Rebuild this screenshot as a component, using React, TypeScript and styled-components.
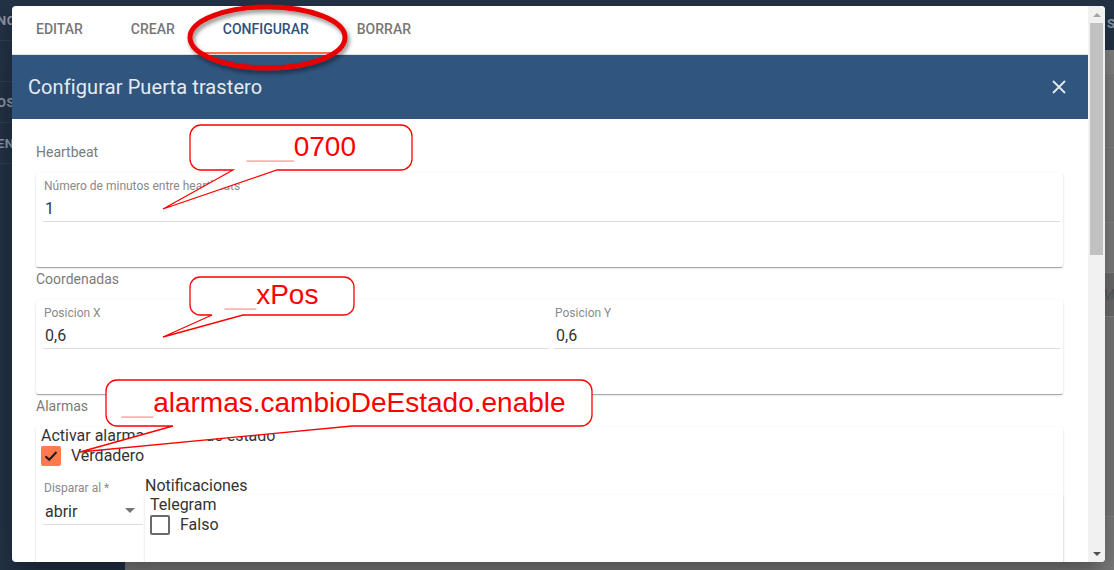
import React from "react";
import styled, { createGlobalStyle } from "styled-components";

const GlobalStyle = createGlobalStyle`
  html, body { margin: 0; padding: 0; width: 1114px; height: 570px; overflow: hidden; }
  body { font-family: Roboto, "Liberation Sans", sans-serif; }
  * { box-sizing: border-box; }
`;

const Screen = styled.div`
  position: relative;
  width: 1114px;
  height: 570px;
  overflow: hidden;
  display: grid;
  grid-template-columns: 125px 1fr;
  grid-template-rows: 50px 1fr;
`;

const Sidebar = styled.nav`
  grid-row: 1 / 3;
  background: #243447;
  display: flex;
  flex-direction: column;
`;

const SideItem = styled.div`
  height: 41px;
  border-bottom: 1px solid #30415a;
  display: flex;
  align-items: center;
  overflow: hidden;
`;

const SideText = styled.span`
  margin-left: -3px;
  font: 700 13px Roboto, sans-serif;
  color: #8f9aa9;
  letter-spacing: 0.5px;
`;

const TopBar = styled.header`
  background: #243447;
  display: flex;
  align-items: center;
  justify-content: flex-end;
  padding-bottom: 4px;
`;

const TopBarText = styled.span`
  font: 700 13px Roboto, sans-serif;
  color: #8f9aa9;
  margin-right: -1px;
`;

const Main = styled.main`
  background: #7f7f7f;
  display: flex;
  flex-direction: column;
`;

const MainBand = styled.div<{ $h: number; $bg: string }>`
  height: ${(p) => p.$h}px;
  background: ${(p) => p.$bg};
  border-bottom: 1px solid #8a8a8a;
  display: flex;
  align-items: center;
  justify-content: flex-end;
  font: italic 400 14px Roboto, sans-serif;
  color: #5a5a5a;
`;

const Dialog = styled.div`
  position: absolute;
  left: 12px;
  top: 6px;
  width: 1093px;
  height: 556px;
  background: #fff;
  border-radius: 4px;
  overflow: hidden;
  display: flex;
  box-shadow: 0 11px 15px -7px rgba(0, 0, 0, 0.2), 0 24px 38px 3px rgba(0, 0, 0, 0.14),
    0 9px 46px 8px rgba(0, 0, 0, 0.12);
`;

const DialogMain = styled.div`
  flex: 1;
  min-width: 0;
  display: flex;
  flex-direction: column;
`;

const TabBar = styled.div`
  height: 49px;
  flex-shrink: 0;
  border-bottom: 1px solid #dedede;
  display: flex;
`;

const Tab = styled.div<{ $active?: boolean }>`
  position: relative;
  padding: 0 24px;
  display: flex;
  align-items: center;
  padding-bottom: 2px;
  font: 500 14px Roboto, sans-serif;
  text-transform: uppercase;
  color: ${(p) => (p.$active ? "#2f5179" : "#777777")};
  &::after {
    content: "";
    display: ${(p) => (p.$active ? "block" : "none")};
    position: absolute;
    left: 0;
    right: 0;
    bottom: 0;
    height: 2px;
    background: #ff7043;
  }
`;

const Header = styled.div`
  height: 64px;
  flex-shrink: 0;
  background: #30557e;
  display: flex;
  align-items: center;
  justify-content: space-between;
  padding: 0 17px 0 16px;
`;

const Title = styled.h2`
  margin: 0;
  font: 400 20px Roboto, sans-serif;
  letter-spacing: 0.1px;
  color: #e6ebf1;
`;

const CloseButton = styled.div`
  width: 24px;
  height: 24px;
  display: flex;
  align-items: center;
  justify-content: center;
`;

const Body = styled.div`
  flex: 1;
  overflow: hidden;
  padding: 23px 25px 0 24px;
  display: flex;
  flex-direction: column;
`;

const SectionLabel = styled.div`
  font: 400 14px/20px Roboto, sans-serif;
  color: #7b7b7b;
  margin-bottom: 11px;
`;

const Card = styled.div<{ $min?: number }>`
  background: #fff;
  border-radius: 2px;
  margin-bottom: 2px;
  min-height: ${(p) => p.$min ?? 0}px;
  flex-shrink: 0;
  box-shadow: 0 2px 1px -1px rgba(0, 0, 0, 0.2), 0 1px 1px 0 rgba(0, 0, 0, 0.14),
    0 1px 3px 0 rgba(0, 0, 0, 0.12);
`;

const FieldGrid = styled.div<{ $cols: number }>`
  display: grid;
  grid-template-columns: repeat(${(p) => p.$cols}, 1fr);
  gap: 5px;
  padding: 6px 3px 0 7px;
`;

const Field = styled.div`
  border-bottom: 1px solid #dcdcdc;
`;

const FieldLabel = styled.div`
  font: 400 12px/14px Roboto, sans-serif;
  color: #8a8a8a;
  padding-left: 1px;
`;

const FieldValue = styled.div`
  font: 400 16px/24px Roboto, sans-serif;
  color: #333;
  margin-top: 4px;
  padding-left: 2px;
`;

const CardSpacer = styled.div`
  height: 45px;
`;

const PlainText = styled.div<{ $pad?: number }>`
  font: 400 16px/18px Roboto, sans-serif;
  color: #333;
  padding-left: ${(p) => p.$pad ?? 0}px;
`;

const CheckRow = styled.div<{ $pad?: number }>`
  display: flex;
  align-items: center;
  gap: 10px;
  padding-left: ${(p) => p.$pad ?? 5}px;
  margin-top: 1px;
  font: 400 16px/20px Roboto, sans-serif;
  color: #333;
`;

const CheckBox = styled.div<{ $checked?: boolean }>`
  width: 20px;
  height: 20px;
  border-radius: 2px;
  display: flex;
  align-items: center;
  justify-content: center;
  background: ${(p) => (p.$checked ? "#ff7a50" : "transparent")};
  border: ${(p) => (p.$checked ? "none" : "2px solid #6a6a6a")};
`;

const AlarmRow = styled.div`
  display: flex;
  align-items: flex-start;
  margin-top: 10px;
`;

const SelectField = styled.div`
  width: 100px;
  margin: 0 2px 0 7px;
  padding-top: 5px;
  border-bottom: 1px solid #dcdcdc;
`;

const SelectValue = styled.div`
  display: flex;
  align-items: center;
  justify-content: space-between;
  font: 400 16px/24px Roboto, sans-serif;
  color: #333;
  margin-top: 5px;
  padding: 0 8px 0 2px;
`;

const DropArrow = styled.span`
  width: 0;
  height: 0;
  border-left: 5px solid transparent;
  border-right: 5px solid transparent;
  border-top: 5px solid #757575;
  margin-top: -3px;
`;

const NotifColumn = styled.div`
  flex: 1;
  display: flex;
  flex-direction: column;
  padding-top: 1px;
`;

const NestedCard = styled(Card)`
  margin-top: 0;
  padding: 1px 5px;
  min-height: 140px;
`;

const ScrollTrack = styled.div`
  width: 17px;
  flex-shrink: 0;
  background: #f1f1f1;
  display: flex;
  flex-direction: column;
`;

const ScrollButton = styled.div`
  height: 17px;
  display: flex;
  align-items: center;
  justify-content: center;
`;

const ArrowUp = styled.span`
  width: 0;
  height: 0;
  border-left: 4px solid transparent;
  border-right: 4px solid transparent;
  border-bottom: 4px solid #a3a3a3;
`;

const ArrowDown = styled.span`
  width: 0;
  height: 0;
  border-left: 4px solid transparent;
  border-right: 4px solid transparent;
  border-top: 4px solid #505050;
`;

const ScrollThumb = styled.div`
  height: 232px;
  margin: 0 2px;
  background: #c1c1c1;
`;

const ScrollFill = styled.div`
  flex: 1;
`;

const Overlay = styled.svg`
  position: absolute;
  left: 0;
  top: 0;
  width: 1114px;
  height: 570px;
  pointer-events: none;
  z-index: 10;
`;

type CalloutSpec = {
  x: number; y: number; w: number; h: number; r: number;
  a: number; b: number; tx: number; ty: number;
  textX: number; baseline: number; under: string; label: string;
};

const callouts: CalloutSpec[] = [
  { x: 190, y: 125, w: 222, h: 45, r: 11, a: 233, b: 277, tx: 163, ty: 209, textX: 247, baseline: 156, under: "___", label: "0700" },
  { x: 190, y: 277, w: 164, h: 38, r: 10, a: 212, b: 243, tx: 163, ty: 337, textX: 225, baseline: 304, under: "__", label: "xPos" },
  { x: 106, y: 380, w: 486, h: 46, r: 11, a: 173, b: 352, tx: 80, ty: 452, textX: 122, baseline: 412, under: "__", label: "alarmas.cambioDeEstado.enable" },
];

function calloutPath(c: CalloutSpec) {
  const { x, y, w, h, r, a, b, tx, ty } = c;
  return `M${x + r},${y} H${x + w - r} A${r},${r} 0 0 1 ${x + w},${y + r} V${y + h - r} A${r},${r} 0 0 1 ${x + w - r},${y + h} H${b} L${tx},${ty} L${a},${y + h} H${x + r} A${r},${r} 0 0 1 ${x},${y + h - r} V${y + r} A${r},${r} 0 0 1 ${x + r},${y} Z`;
}

const CheckIcon = () => (
  <svg width="14" height="12" viewBox="0 0 14 12">
    <path d="M1.5 6.2 L5.2 9.8 L12.5 2" fill="none" stroke="#1e1e1e" strokeWidth="2" />
  </svg>
);

const CloseIcon = () => (
  <svg width="14" height="14" viewBox="0 0 14 14">
    <path d="M1 1 L13 13 M13 1 L1 13" stroke="#e3e8ef" strokeWidth="1.8" />
  </svg>
);

export default function App() {
  return (
    <>
      <GlobalStyle />
      <Screen>
        <Sidebar>
          <SideItem><SideText>NC</SideText></SideItem>
          <SideItem />
          <SideItem><SideText>OS</SideText></SideItem>
          <SideItem><SideText>EN</SideText></SideItem>
        </Sidebar>
        <TopBar>
          <TopBarText>S</TopBarText>
        </TopBar>
        <Main>
          <MainBand $h={24} $bg="#868686" />
          <MainBand $h={74} $bg="#808080" />
          <MainBand $h={75} $bg="#7f7f7f" />
          <MainBand $h={50} $bg="#808080" />
          <MainBand $h={44} $bg="#6f6f6f">M</MainBand>
          <MainBand $h={200} $bg="#7c7c7c" />
        </Main>

        <Dialog>
          <DialogMain>
            <TabBar>
              <Tab>Editar</Tab>
              <Tab>Crear</Tab>
              <Tab $active>Configurar</Tab>
              <Tab>Borrar</Tab>
            </TabBar>
            <Header>
              <Title>Configurar Puerta trastero</Title>
              <CloseButton><CloseIcon /></CloseButton>
            </Header>
            <Body>
              <SectionLabel>Heartbeat</SectionLabel>
              <Card>
                <FieldGrid $cols={1}>
                  <Field>
                    <FieldLabel>Número de minutos entre heartbeats</FieldLabel>
                    <FieldValue>1</FieldValue>
                  </Field>
                </FieldGrid>
                <CardSpacer />
              </Card>

              <SectionLabel>Coordenadas</SectionLabel>
              <Card>
                <FieldGrid $cols={2}>
                  <Field>
                    <FieldLabel>Posicion X</FieldLabel>
                    <FieldValue>0,6</FieldValue>
                  </Field>
                  <Field>
                    <FieldLabel>Posicion Y</FieldLabel>
                    <FieldValue>0,6</FieldValue>
                  </Field>
                </FieldGrid>
                <CardSpacer />
              </Card>

              <SectionLabel>Alarmas</SectionLabel>
              <Card $min={220}>
                <PlainText $pad={5}>Activar alarma cambio de estado</PlainText>
                <CheckRow>
                  <CheckBox $checked><CheckIcon /></CheckBox>
                  Verdadero
                </CheckRow>
                <AlarmRow>
                  <SelectField>
                    <FieldLabel>Disparar al *</FieldLabel>
                    <SelectValue>
                      abrir
                      <DropArrow />
                    </SelectValue>
                  </SelectField>
                  <NotifColumn>
                    <PlainText>Notificaciones</PlainText>
                    <NestedCard>
                      <PlainText>Telegram</PlainText>
                      <CheckRow $pad={0}>
                        <CheckBox />
                        Falso
                      </CheckRow>
                    </NestedCard>
                  </NotifColumn>
                </AlarmRow>
              </Card>
            </Body>
          </DialogMain>
          <ScrollTrack>
            <ScrollButton><ArrowUp /></ScrollButton>
            <ScrollThumb />
            <ScrollFill />
            <ScrollButton><ArrowDown /></ScrollButton>
          </ScrollTrack>
        </Dialog>

        <Overlay viewBox="0 0 1114 570">
          <defs>
            <filter id="ellShadow" x="-20%" y="-40%" width="140%" height="180%">
              <feDropShadow dx="2" dy="3" stdDeviation="2" floodColor="#000" floodOpacity="0.45" />
            </filter>
          </defs>
          <ellipse cx="267.5" cy="37.5" rx="77.5" ry="30.5" fill="none" stroke="#e80000" strokeWidth="5" filter="url(#ellShadow)" />
          {callouts.map((c, i) => (
            <g key={i}>
              <path d={calloutPath(c)} fill="#fff" stroke="#ff0000" strokeWidth="1.3" />
              <text x={c.textX} y={c.baseline} fontFamily="'Liberation Sans', Arial, sans-serif" fontSize="28">
                <tspan fill="#ffb4b4">{c.under}</tspan>
                <tspan fill="#ff0000">{c.label}</tspan>
              </text>
            </g>
          ))}
        </Overlay>
      </Screen>
    </>
  );
}
